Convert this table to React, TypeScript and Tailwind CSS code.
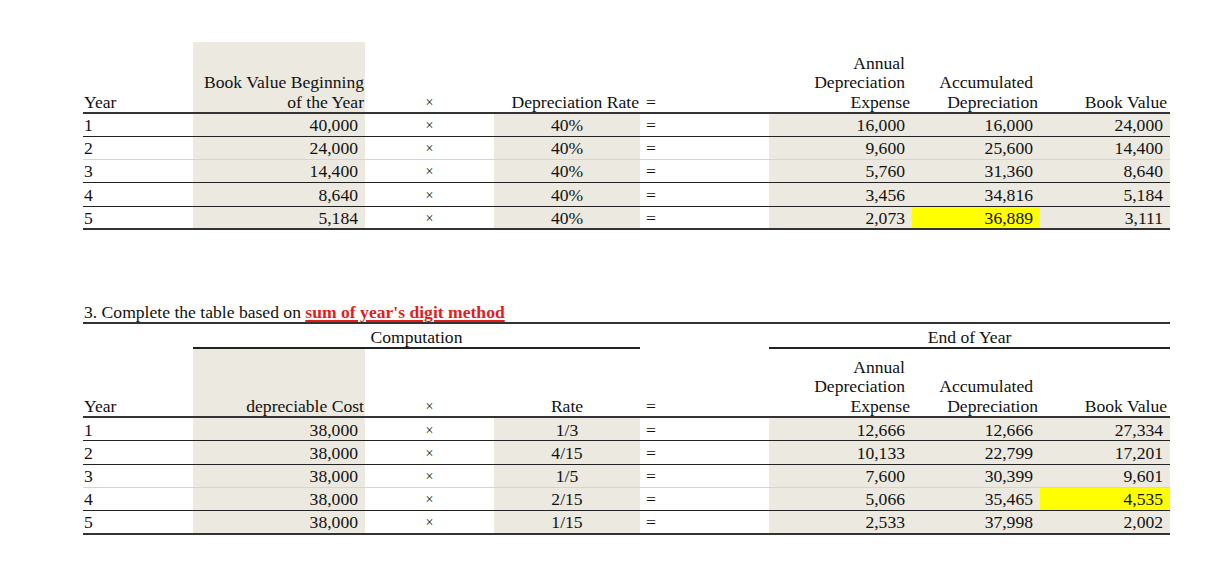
import React from "react";

type Row = {
  year: string;
  base: string;
  rate: string;
  expense: string;
  accum: string;
  book: string;
  line: "dark" | "light" | "bottom";
  hl?: "accum" | "book";
};

const table1: Row[] = [
  { year: "1", base: "40,000", rate: "40%", expense: "16,000", accum: "16,000", book: "24,000", line: "dark" },
  { year: "2", base: "24,000", rate: "40%", expense: "9,600", accum: "25,600", book: "14,400", line: "light" },
  { year: "3", base: "14,400", rate: "40%", expense: "5,760", accum: "31,360", book: "8,640", line: "dark" },
  { year: "4", base: "8,640", rate: "40%", expense: "3,456", accum: "34,816", book: "5,184", line: "dark" },
  { year: "5", base: "5,184", rate: "40%", expense: "2,073", accum: "36,889", book: "3,111", line: "bottom", hl: "accum" },
];

const table2: Row[] = [
  { year: "1", base: "38,000", rate: "1/3", expense: "12,666", accum: "12,666", book: "27,334", line: "dark" },
  { year: "2", base: "38,000", rate: "4/15", expense: "10,133", accum: "22,799", book: "17,201", line: "dark" },
  { year: "3", base: "38,000", rate: "1/5", expense: "7,600", accum: "30,399", book: "9,601", line: "light" },
  { year: "4", base: "38,000", rate: "2/15", expense: "5,066", accum: "35,465", book: "4,535", line: "dark", hl: "book" },
  { year: "5", base: "38,000", rate: "1/15", expense: "2,533", accum: "37,998", book: "2,002", line: "bottom" },
];

const Cols = () => (
  <colgroup>
    <col className="w-[110px]" />
    <col className="w-[172px]" />
    <col className="w-[129px]" />
    <col className="w-[146px]" />
    <col className="w-[129px]" />
    <col className="w-[143px]" />
    <col className="w-[128px]" />
    <col className="w-[130px]" />
  </colgroup>
);

const lineClass = (line: Row["line"]) =>
  line === "light"
    ? "border-b border-[#d4d4d4]"
    : line === "bottom"
    ? "border-b-2 border-[#333]"
    : "border-b border-[#222]";

const Body = ({ rows }: { rows: Row[] }) => (
  <tbody>
    {rows.map((r) => (
      <tr key={r.year} className={`h-[23.3px] ${lineClass(r.line)}`}>
        <td className="pl-[1px] pt-[2px] text-left">{r.year}</td>
        <td className="bg-[#ece9e1] pr-[7px] pt-[2px] text-right">{r.base}</td>
        <td className="text-center pt-[2px] text-[14px]">×</td>
        <td className="bg-[#ece9e1] pt-[2px] text-center">{r.rate}</td>
        <td className="pl-[6px] pt-[2px] text-left">=</td>
        <td className="bg-[#ece9e1] pr-[7px] pt-[2px] text-right">{r.expense}</td>
        <td className={`${r.hl === "accum" ? "bg-[#ffff00]" : "bg-[#ece9e1]"} pr-[7px] pt-[2px] text-right`}>{r.accum}</td>
        <td className={`${r.hl === "book" ? "bg-[#ffff00]" : "bg-[#ece9e1]"} pr-[7px] pt-[2px] text-right`}>{r.book}</td>
      </tr>
    ))}
  </tbody>
);

const EndHeaders = () => (
  <>
    <td className="align-bottom text-right">
      <div className="pr-[7px]">Annual</div>
      <div className="pr-[7px]">Depreciation</div>
      <div className="pr-[2px]">Expense</div>
    </td>
    <td className="align-bottom text-right">
      <div className="pr-[7px]">Accumulated</div>
      <div className="pr-[2px]">Depreciation</div>
    </td>
    <td className="align-bottom text-right pr-[3px]">Book Value</td>
  </>
);

export default function App() {
  return (
    <div className="min-h-[583px] bg-white text-[#111] font-['Liberation_Serif','Times_New_Roman',serif] text-[17.6px] leading-[19.5px]">
      <div className="pl-[83px] pt-[42px] w-[1170px]">
        <table className="w-[1087px] table-fixed border-collapse">
          <Cols />
          <thead>
            <tr className="h-[71px] border-b-2 border-[#333]">
              <td className="align-bottom pl-[1px]">Year</td>
              <td className="align-bottom bg-[#ece9e1] text-right pr-[1px]">
                <div>Book Value Beginning</div>
                <div>of the Year</div>
              </td>
              <td className="align-bottom text-center text-[14px]">×</td>
              <td className="align-bottom text-right pr-[1px]">Depreciation Rate</td>
              <td className="align-bottom pl-[6px]">=</td>
              <EndHeaders />
            </tr>
          </thead>
          <Body rows={table1} />
        </table>

        <div className="mt-[72px] h-[22px] flex items-end border-b-2 border-[#333] pl-[1px]">
          <span>
            3. Complete the table based on{" "}
            <span className="font-bold text-[#e51c1c] underline decoration-[1.5px] underline-offset-[2px]">
              sum of year's digit method
            </span>
          </span>
        </div>

        <table className="w-[1087px] table-fixed border-collapse">
          <Cols />
          <thead>
            <tr className="h-[24px]">
              <td />
              <td colSpan={3} className="text-center border-b-2 border-[#222] align-bottom">
                Computation
              </td>
              <td />
              <td colSpan={3} className="text-center border-b-2 border-[#222] align-bottom">
                End of Year
              </td>
            </tr>
            <tr className="h-[69px] border-b-2 border-[#333]">
              <td className="align-bottom pl-[1px]">Year</td>
              <td className="align-bottom bg-[#ece9e1] text-right pr-[1px]">depreciable Cost</td>
              <td className="align-bottom text-center text-[14px]">×</td>
              <td className="align-bottom text-center">Rate</td>
              <td className="align-bottom pl-[6px]">=</td>
              <EndHeaders />
            </tr>
          </thead>
          <Body rows={table2} />
        </table>
      </div>
    </div>
  );
}
